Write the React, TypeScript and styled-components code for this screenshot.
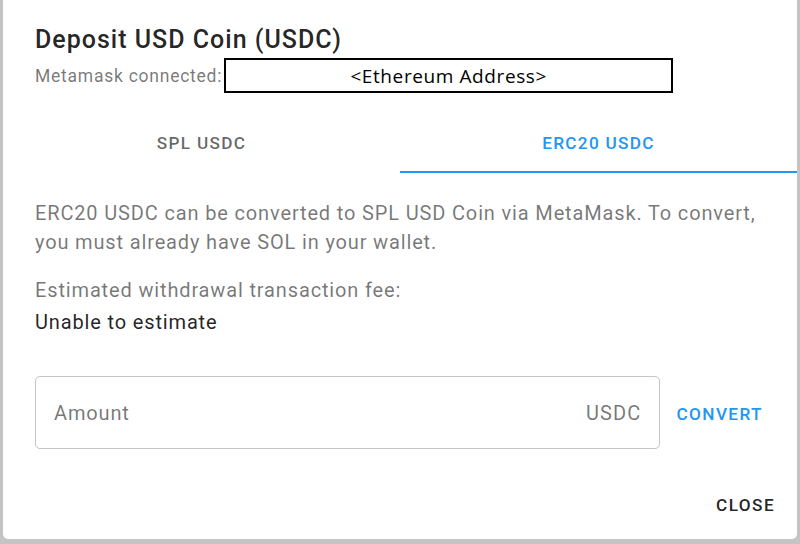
import React, { useState } from 'react';
import styled, { createGlobalStyle } from 'styled-components';

const GlobalStyle = createGlobalStyle`
  html, body {
    margin: 0;
    padding: 0;
    background: #c4c4c4;
    font-family: Roboto, "Liberation Sans", sans-serif;
  }
  * { box-sizing: border-box; }
`;

const Dialog = styled.div`
  width: 794px;
  height: 539px;
  margin-left: 3px;
  background: #ffffff;
  border-radius: 0 0 5px 5px;
  display: flex;
  flex-direction: column;
`;

const Header = styled.div`
  padding: 21px 32px 0 32px;
`;

const Title = styled.h2`
  margin: 0;
  font-size: 25px;
  font-weight: 500;
  line-height: 37px;
  color: rgba(0, 0, 0, 0.87);
  letter-spacing: 1px;
`;

const ConnectedRow = styled.div`
  display: flex;
  align-items: center;
  height: 35px;
  font-size: 17.5px;
  letter-spacing: 0.75px;
  color: rgba(0, 0, 0, 0.54);
`;

const AddressBox = styled.div`
  margin-left: 2px;
  width: 449px;
  height: 35px;
  border: 2px solid #000;
  display: flex;
  align-items: center;
  justify-content: center;
  font-family: "Open Sans", "Noto Sans", sans-serif;
  font-size: 19px;
  letter-spacing: 0.6px;
  color: #000;
`;

const TabBar = styled.div`
  margin-top: 21px;
  display: flex;
  height: 59px;
`;

const Tab = styled.button<{ $active: boolean }>`
  flex: 1;
  border: 0;
  background: transparent;
  font-family: Roboto, "Liberation Sans", sans-serif;
  font-size: 17.2px;
  font-weight: 500;
  letter-spacing: 1.3px;
  text-transform: uppercase;
  color: ${(p) => (p.$active ? '#2196f3' : 'rgba(0, 0, 0, 0.6)')};
  border-bottom: 2.5px solid ${(p) => (p.$active ? '#2196f3' : 'transparent')};
  padding: 0;
  cursor: pointer;
`;

const Content = styled.div`
  padding: 26px 16px 0 32px;
  flex: 1;
`;

const Body = styled.p<{ $dark?: boolean }>`
  margin: 0;
  font-size: 20px;
  line-height: 28.8px;
  letter-spacing: 0.85px;
  color: ${(p) => (p.$dark ? 'rgba(0, 0, 0, 0.87)' : 'rgba(0, 0, 0, 0.54)')};
`;

const FeeBlock = styled.div`
  margin-top: 19px;
  display: flex;
  flex-direction: column;
  gap: 4px;
`;

const AmountRow = styled.div`
  margin-top: 39px;
  display: flex;
  align-items: center;
  gap: 6px;
  padding-right: 8px;
`;

const Field = styled.label`
  flex: 1;
  height: 73px;
  border: 1px solid rgba(0, 0, 0, 0.23);
  border-radius: 5px;
  display: flex;
  align-items: center;
  padding: 0 18px 0 18px;
`;

const Input = styled.input`
  flex: 1;
  min-width: 0;
  border: 0;
  outline: none;
  background: transparent;
  font-family: Roboto, "Liberation Sans", sans-serif;
  font-size: 20px;
  letter-spacing: 0.85px;
  color: rgba(0, 0, 0, 0.87);
  padding: 0;
  &::placeholder {
    color: rgba(0, 0, 0, 0.54);
    opacity: 1;
  }
`;

const Adornment = styled.span`
  font-size: 20px;
  letter-spacing: 1.1px;
  color: rgba(0, 0, 0, 0.54);
`;

const TextButton = styled.button<{ $color?: string; $shift?: number }>`
  border: 0;
  background: transparent;
  font-family: Roboto, "Liberation Sans", sans-serif;
  font-size: 17.2px;
  font-weight: 500;
  letter-spacing: 1.4px;
  text-transform: uppercase;
  color: ${(p) => p.$color || 'rgba(0, 0, 0, 0.87)'};
  padding: 7px 10px;
  min-width: 77px;
  line-height: 29px;
  margin-top: ${(p) => p.$shift || 0}px;
  cursor: pointer;
`;

const Actions = styled.div`
  display: flex;
  justify-content: flex-end;
  padding: 0 12px 12px 12px;
`;

export default function App() {
  const [tab, setTab] = useState(1);
  return (
    <>
      <GlobalStyle />
      <Dialog>
        <Header>
          <Title>Deposit USD Coin (USDC)</Title>
          <ConnectedRow>
            Metamask connected:
            <AddressBox>&lt;Ethereum Address&gt;</AddressBox>
          </ConnectedRow>
        </Header>
        <TabBar>
          <Tab $active={tab === 0} onClick={() => setTab(0)}>SPL USDC</Tab>
          <Tab $active={tab === 1} onClick={() => setTab(1)}>ERC20 USDC</Tab>
        </TabBar>
        <Content>
          <Body>
            ERC20 USDC can be converted to SPL USD Coin via MetaMask. To convert, you must already have SOL in your wallet.
          </Body>
          <FeeBlock>
            <Body>Estimated withdrawal transaction fee:</Body>
            <Body $dark>Unable to estimate</Body>
          </FeeBlock>
          <AmountRow>
            <Field>
              <Input placeholder="Amount" />
              <Adornment>USDC</Adornment>
            </Field>
            <TextButton $color="#2196f3" $shift={3}>Convert</TextButton>
          </AmountRow>
        </Content>
        <Actions>
          <TextButton>Close</TextButton>
        </Actions>
      </Dialog>
    </>
  );
}
